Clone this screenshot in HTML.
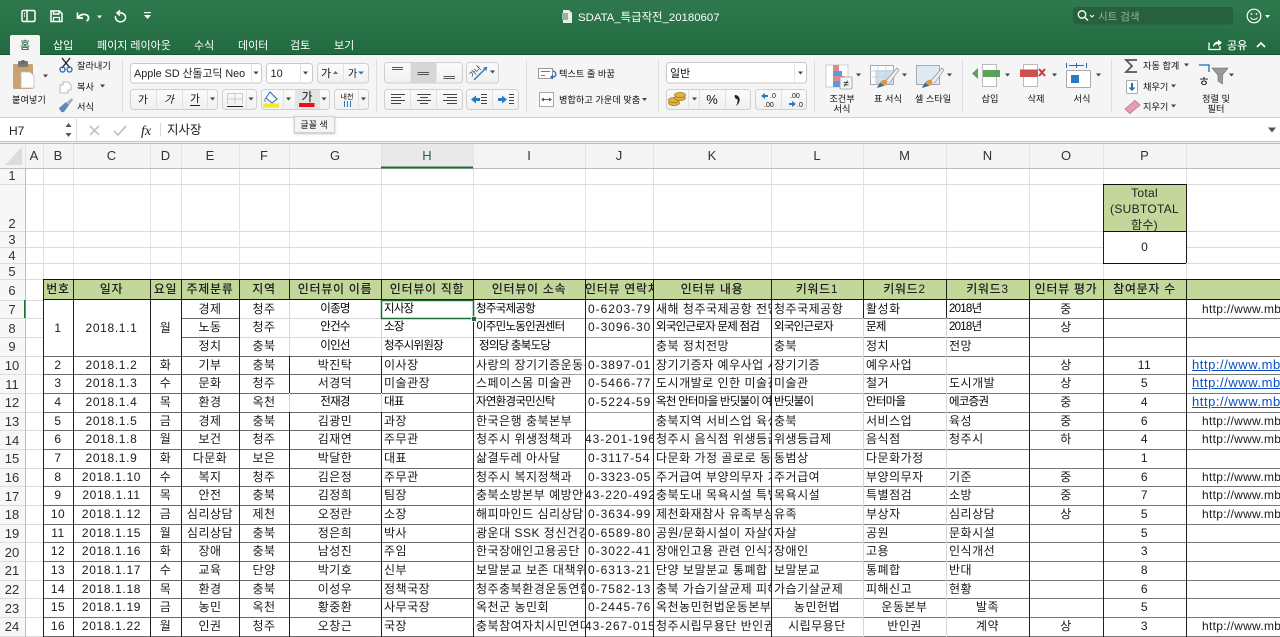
<!DOCTYPE html>
<html lang="ko"><head><meta charset="utf-8"><title>SDATA_특급작전_20180607</title>
<style>
html,body{margin:0;padding:0;background:#fff}
body{width:1280px;height:637px;overflow:hidden;position:relative;font-family:"Liberation Sans","Noto Sans CJK KR",sans-serif;color:#222;filter:blur(.3px)}
svg{position:absolute;left:0;top:0;display:block}
svg text{font-family:"Liberation Sans","Noto Sans CJK KR",sans-serif}
.w{fill:#fff;font-size:11px}
.k{fill:#111;font-size:9.200px;font-weight:400}
.m{text-anchor:middle}
.g{position:absolute;left:43px;top:279px;display:grid;grid-template-columns:30px 77px 31px 58px 50px 92px 92px 112px 68px 118px 92px 83px 83px 74px 83px 94px;grid-template-rows:20.7px repeat(18,18.67px);font-size:12px;line-height:18.67px;color:#1a1a1a}
.g>*{display:block;overflow:hidden;white-space:nowrap;font-style:normal;font-weight:400;letter-spacing:.5px;text-decoration:none}
.g b{text-align:center}
.g i{padding-left:3px}
.g .h{background:#c4d79b;text-align:center;line-height:20px;font-weight:500;color:#1d1d1d;letter-spacing:.7px}
.g .d{letter-spacing:.65px}
.g .n{letter-spacing:.95px;padding-left:3px}
.g .nn{letter-spacing:.95px;padding-left:0}
.g .t{font-size:11.5px;letter-spacing:-.75px;color:#000}
.g .u{padding-left:16px;letter-spacing:.3px}
.g a{padding-left:6px;color:#0b4fc4;text-decoration:underline;letter-spacing:.55px;font-size:13px}
.g .r{grid-row:span 3;line-height:56px}
.ch,.rh{position:absolute;font-size:13px;color:#333;text-align:center}
.ch{top:144px;height:24px;line-height:24px}
.rh{left:0;width:24px}
.tot{position:absolute;left:1103px;top:184px;width:83px;height:46px;padding-top:1px;background:#c4d79b;text-align:center;font-size:12px;line-height:16px;color:#222;letter-spacing:.3px}
.zero{position:absolute;left:1103px;top:231px;width:83px;height:32px;text-align:center;font-size:12px;line-height:32px}
</style></head><body>

<div style="position:absolute;left:0;top:144px;width:1280px;height:24px;background:#f4f4f4"></div>
<div style="position:absolute;left:0;top:168px;width:25px;height:469px;background:#f7f7f7"></div>
<div style="position:absolute;left:381px;top:144px;width:92px;height:24px;background:#e9e9e9"></div>
<div style="position:absolute;left:43px;top:279px;width:1237px;height:21px;background:#c4d79b"></div>

<div class="g">
<span class="h">번호</span><span class="h">일자</span><span class="h">요일</span><span class="h">주제분류</span><span class="h">지역</span><span class="h">인터뷰이 이름</span><span class="h">인터뷰이 직함</span><span class="h">인터뷰이 소속</span><span class="h">인터뷰 연락처</span><span class="h">인터뷰 내용</span><span class="h">키워드1</span><span class="h">키워드2</span><span class="h">키워드3</span><span class="h">인터뷰 평가</span><span class="h">참여문자 수</span><span class="h"></span>

<b class="r">1</b><b class="r d">2018.1.1</b><b class="r">월</b><b>경제</b><b>청주</b><b class="t">이종명</b><i class="t">지사장</i><i class="t">청주국제공항</i><i class="n">0-6203-79</i><i>새해 청주국제공항 전망</i><i>청주국제공항</i><i>활성화</i><i class="t">2018년</i><b>중</b><b></b><i class="u">http://www.mb</i>
<b>노동</b><b>청주</b><b class="t">안건수</b><i class="t">소장</i><i class="t">이주민노동인권센터</i><i class="n">0-3096-30</i><i class="t">외국인근로자 문제 점검</i><i class="t">외국인근로자</i><i class="t">문제</i><i class="t">2018년</i><b>상</b><b></b><i></i>
<b>정치</b><b>충북</b><b class="t">이인선</b><i class="t">청주시위원장</i><i class="t" style="padding-left:6px">정의당 충북도당</i><i></i><i>충북 정치전망</i><i>충북</i><i>정치</i><i>전망</i><b></b><b></b><i></i>

<b>2</b><b class="d">2018.1.2</b><b>화</b><b>기부</b><b>충북</b><b>박진탁</b><i>이사장</i><i>사랑의 장기기증운동본</i><i class="n">0-3897-01</i><i>장기기증자 예우사업 시</i><i>장기기증</i><i>예우사업</i><i></i><b>상</b><b>11</b><a>http://www.mbc</a>
<b>3</b><b class="d">2018.1.3</b><b>수</b><b>문화</b><b>청주</b><b>서경덕</b><i>미술관장</i><i>스페이스몸 미술관</i><i class="n">0-5466-77</i><i>도시개발로 인한 미술관</i><i>미술관</i><i>철거</i><i>도시개발</i><b>상</b><b>5</b><a>http://www.mbc</a>
<b>4</b><b class="d">2018.1.4</b><b>목</b><b>환경</b><b>옥천</b><b class="t">전재경</b><i class="t">대표</i><i class="t">자연환경국민신탁</i><i class="n">0-5224-59</i><i class="t">옥천 안터마을 반딧불이 여</i><i class="t">반딧불이</i><i class="t">안터마을</i><i class="t">에코증권</i><b>중</b><b>4</b><a>http://www.mbc</a>
<b>5</b><b class="d">2018.1.5</b><b>금</b><b>경제</b><b>충북</b><b>김광민</b><i>과장</i><i>한국은행 충북본부</i><i></i><i>충북지역 서비스업 육성</i><i>충북</i><i>서비스업</i><i>육성</i><b>중</b><b>6</b><i class="u">http://www.mb</i>
<b>6</b><b class="d">2018.1.8</b><b>월</b><b>보건</b><b>청주</b><b>김재연</b><i>주무관</i><i>청주시 위생정책과</i><i class="nn">43-201-196</i><i>청주시 음식점 위생등급</i><i>위생등급제</i><i>음식점</i><i>청주시</i><b>하</b><b>4</b><i class="u">http://www.mb</i>
<b>7</b><b class="d">2018.1.9</b><b>화</b><b>다문화</b><b>보은</b><b>박달한</b><i>대표</i><i>삶결두레 아사달</i><i class="n">0-3117-54</i><i>다문화 가정 골로로 동</i><i>동범상</i><i>다문화가정</i><i></i><b></b><b>1</b><i></i>
<b>8</b><b class="d">2018.1.10</b><b>수</b><b>복지</b><b>청주</b><b>김은정</b><i>주무관</i><i>청주시 복지정책과</i><i class="n">0-3323-05</i><i>주거급여 부양의무자 기</i><i>주거급여</i><i>부양의무자</i><i>기준</i><b>중</b><b>6</b><i class="u">http://www.mb</i>
<b>9</b><b class="d">2018.1.11</b><b>목</b><b>안전</b><b>충북</b><b>김정희</b><i>팀장</i><i>충북소방본부 예방안</i><i class="nn">43-220-492</i><i>충북도내 목욕시설 특별</i><i>목욕시설</i><i>특별점검</i><i>소방</i><b>중</b><b>7</b><i class="u">http://www.mb</i>
<b>10</b><b class="d">2018.1.12</b><b>금</b><b>심리상담</b><b>제천</b><b>오정란</b><i>소장</i><i>해피마인드 심리상담</i><i class="n">0-3634-99</i><i>제천화재참사 유족부상</i><i>유족</i><i>부상자</i><i>심리상담</i><b>상</b><b>5</b><i class="u">http://www.mb</i>
<b>11</b><b class="d">2018.1.15</b><b>월</b><b>심리상담</b><b>충북</b><b>정은희</b><i>박사</i><i>광운대 SSK 정신건강</i><i class="n">0-6589-80</i><i>공원/문화시설이 자살여</i><i>자살</i><i>공원</i><i>문화시설</i><b></b><b>5</b><i></i>
<b>12</b><b class="d">2018.1.16</b><b>화</b><b>장애</b><b>충북</b><b>남성진</b><i>주임</i><i>한국장애인고용공단</i><i class="n">0-3022-41</i><i>장애인고용 관련 인식개</i><i>장애인</i><i>고용</i><i>인식개선</i><b></b><b>3</b><i></i>
<b>13</b><b class="d">2018.1.17</b><b>수</b><b>교육</b><b>단양</b><b>박기호</b><i>신부</i><i>보말분교 보존 대책위</i><i class="n">0-6313-21</i><i>단양 보말분교 통폐합</i><i>보말분교</i><i>통폐합</i><i>반대</i><b></b><b>8</b><i></i>
<b>14</b><b class="d">2018.1.18</b><b>목</b><b>환경</b><b>충북</b><b>이성우</b><i>정책국장</i><i>청주충북환경운동연합</i><i class="n">0-7582-13</i><i>충북 가습기살균제 피해</i><i>가습기살균제</i><i>피해신고</i><i>현황</i><b></b><b>6</b><i></i>
<b>15</b><b class="d">2018.1.19</b><b>금</b><b>농민</b><b>옥천</b><b>황중환</b><i>사무국장</i><i>옥천군 농민회</i><i class="n">0-2445-76</i><i>옥천농민헌법운동본부</i><b>농민헌법</b><b>운동본부</b><b>발족</b><b></b><b>5</b><i></i>
<b>16</b><b class="d">2018.1.22</b><b>월</b><b>인권</b><b>청주</b><b>오창근</b><i>국장</i><i>충북참여자치시민연대</i><i class="nn">43-267-015</i><i>청주시립무용단 반인권</i><b>시립무용단</b><b>반인권</b><b>계약</b><b>상</b><b>3</b><i class="u">http://www.mb</i>
</div>

<div class="tot">Total<br>(SUBTOTAL<br>함수)</div>
<div class="zero">0</div>

<div class="ch" style="left:25px;width:18px">A</div><div class="ch" style="left:43px;width:30px">B</div><div class="ch" style="left:73px;width:77px">C</div><div class="ch" style="left:150px;width:31px">D</div><div class="ch" style="left:181px;width:58px">E</div><div class="ch" style="left:239px;width:50px">F</div><div class="ch" style="left:289px;width:92px">G</div><div class="ch" style="left:381px;width:92px;color:#1e6b3a">H</div><div class="ch" style="left:473px;width:112px">I</div><div class="ch" style="left:585px;width:68px">J</div><div class="ch" style="left:653px;width:118px">K</div><div class="ch" style="left:771px;width:92px">L</div><div class="ch" style="left:863px;width:83px">M</div><div class="ch" style="left:946px;width:83px">N</div><div class="ch" style="left:1029px;width:74px">O</div><div class="ch" style="left:1103px;width:83px">P</div>

<div class="rh" style="top:168px;line-height:16px">1</div>
<div class="rh" style="top:216px;line-height:16px">2</div>
<div class="rh" style="top:232px;line-height:16px">3</div>
<div class="rh" style="top:248px;line-height:16px">4</div>
<div class="rh" style="top:264px;line-height:16px">5</div>
<div class="rh" style="top:282px;line-height:18px">6</div>
<div class="rh" style="top:301px;line-height:18px">7</div>
<div class="rh" style="top:320px;line-height:18px">8</div>
<div class="rh" style="top:338px;line-height:18px">9</div>
<div class="rh" style="top:357px;line-height:18px">10</div>
<div class="rh" style="top:376px;line-height:18px">11</div>
<div class="rh" style="top:394px;line-height:18px">12</div>
<div class="rh" style="top:413px;line-height:18px">13</div>
<div class="rh" style="top:432px;line-height:18px">14</div>
<div class="rh" style="top:450px;line-height:18px">15</div>
<div class="rh" style="top:469px;line-height:18px">16</div>
<div class="rh" style="top:488px;line-height:18px">17</div>
<div class="rh" style="top:506px;line-height:18px">18</div>
<div class="rh" style="top:525px;line-height:18px">19</div>
<div class="rh" style="top:544px;line-height:18px">20</div>
<div class="rh" style="top:562px;line-height:18px">21</div>
<div class="rh" style="top:581px;line-height:18px">22</div>
<div class="rh" style="top:600px;line-height:18px">23</div>
<div class="rh" style="top:618px;line-height:18px">24</div>

<svg width="1280" height="637" viewBox="0 0 1280 637" style="pointer-events:none">
<g shape-rendering="crispEdges" fill="none">
<path stroke="#e2e2e2" d="M43.5 144V279M73.5 144V279M150.5 144V279M181.5 144V279M239.5 144V279M289.5 144V279M381.5 144V279M473.5 144V279M585.5 144V279M653.5 144V279M771.5 144V279M863.5 144V279M946.5 144V279M1029.5 144V279M1103.5 144V279M1186.5 144V279M25.5 144V637"/>
<path stroke="#dcdcdc" d="M0 184.5H1280M0 231.5H1280M0 247.5H1103M1187 247.5H1280M0 263.5H1280M0 279.5H43M0 300.5H43M0 318.5H43M0 337.5H43M0 356.5H43M0 374.5H43M0 393.5H43M0 412.5H43M0 430.5H43M0 449.5H43M0 468.5H43M0 486.5H43M0 505.5H43M0 524.5H43M0 542.5H43M0 561.5H43M0 580.5H43M0 598.5H43M0 617.5H43M0 636.5H43"/>
<path stroke="#bdbdbd" d="M0 168.5H1280M0 143.5H1280M25.5 168V637"/>
<path stroke="#6a6a6a" d="M43 356.5H473M43 374.5H473M43 393.5H473M43 412.5H473M43 430.5H473M43 449.5H473M43 468.5H473M43 486.5H473M43 505.5H473M43 524.5H473M43 542.5H473M43 561.5H473M43 580.5H473M43 598.5H473M43 617.5H473M43 636.5H473M181 318.5H239M181 337.5H239"/>
<path stroke="#d8d8d8" d="M239 318.5H473M239 337.5H473"/>
<path stroke="#a0a0a0" d="M473 318.5H863M473 337.5H863M473 356.5H863M473 374.5H863M473 393.5H863M473 412.5H863M473 430.5H863M473 449.5H863M473 468.5H863M473 486.5H863M473 505.5H863M473 524.5H863M473 542.5H863M473 561.5H863M473 580.5H863M473 598.5H863M473 617.5H863M473 636.5H863"/>
<path stroke="#777" d="M863 318.5H1280M863 337.5H1280M863 356.5H1280M863 374.5H1280M863 393.5H1280M863 412.5H1280M863 430.5H1280M863 449.5H1280M863 468.5H1280M863 486.5H1280M863 505.5H1280M863 524.5H1280M863 542.5H1280M863 561.5H1280M863 580.5H1280M863 598.5H1280M863 617.5H1280M863 636.5H1280"/>
<path stroke="#d6d6d6" d="M863.5 318V637M946.5 318V637M289.5 300V356M381.5 318V356M289.5 393V412M381.5 393V412"/>
<path stroke="#1f1f1f" d="M43.5 279V637M73.5 279V637M150.5 279V637M181.5 279V637M239.5 279V637M289.5 279V300M381.5 279V300M289.5 356V393M381.5 356V393M289.5 412V637M381.5 412V637M473.5 279V637M585.5 279V637M653.5 279V637M771.5 279V637M863.5 279V318M946.5 279V318M1029.5 279V637M1103.5 184V263M1103.5 279V637M1186.5 184V263M1186.5 279V637"/>
<path stroke="#111" d="M43 279.5H1280M43 299.5H1280M1103 184.5H1186M1103 231.5H1186M1103 263.5H1186"/>
</g>
<rect x="381" y="166.500" width="92" height="2" fill="#1e6b3a"/>
<rect x="24" y="300" width="1.500" height="18" fill="#1e6b3a"/>
<rect x="381.500" y="300.500" width="92" height="18" fill="none" stroke="#1e6b3a" stroke-width="1.500"/>
<rect x="471.500" y="316.500" width="5" height="5" fill="#1e6b3a" stroke="#fff" stroke-width=".8"/>
<polygon points="22,147 22,165 5,165" fill="#dcdcdc"/>
</svg>

<svg width="1280" height="144" viewBox="0 0 1280 144">
<defs><linearGradient id="tb" x1="0" y1="0" x2="0" y2="1"><stop offset="0" stop-color="#30794f"/><stop offset="1" stop-color="#216a40"/></linearGradient>
<linearGradient id="bt" x1="0" y1="0" x2="0" y2="1"><stop offset="0" stop-color="#fbfbfb"/><stop offset="1" stop-color="#f0f0f0"/></linearGradient></defs>
<rect width="1280" height="55" fill="url(#tb)"/>
<rect y="54" width="1280" height="1" fill="#17552f"/>
<rect y="55" width="1280" height="62" fill="#f5f5f5"/>
<rect y="117" width="1280" height="1" fill="#cfcfcf"/>
<rect y="118" width="1280" height="23" fill="#fff"/>
<rect y="141" width="1280" height="1" fill="#c4c4c4"/>
<rect y="142" width="1280" height="1" fill="#f0f0f0"/>

<g fill="none" stroke="#fff" stroke-width="1.500">
<rect x="22" y="10.500" width="13" height="11" rx="1.500"/><path d="M27 10.500V21.500M24 13.500H25M24 16H25"/>
<path d="M51 11H59.500L62 13.500V21.500H51Z"/><path d="M53.500 11V14H59V11" /><path d="M53.500 21V17.500H59.500V21" stroke-width="1.200"/>
<path d="M77.500 12.500V18H83M78 18C80 14 85 13.500 87.500 15.500 89.500 17.500 88.500 20 86.500 21" stroke-width="1.700"/>
<path d="M120 10.500L117 13 120 15.500M118 13C122 12 126 14.500 125.500 18 125 21 121.500 22.500 118.500 21.500 116 20.500 115 18 115.500 16" stroke-width="1.500"/>
</g>
<path d="M97 15.500h5l-2.500 3z" fill="#fff"/>
<rect x="144" y="12" width="7" height="1.200" fill="#fff"/><path d="M144 15h7l-3.500 4z" fill="#fff"/>

<path d="M10 55V37a2 2 0 0 1 2-2H38a2 2 0 0 1 2 2V55Z" fill="#f5f5f5"/>
<text x="25" y="49" class="m" style="font-size:11px;fill:#1e6b3a;font-weight:500">홈</text>
<text x="53" y="49" class="w">삽입</text>
<text x="97" y="49" class="w">페이지 레이아웃</text>
<text x="194" y="49" class="w">수식</text>
<text x="238" y="49" class="w">데이터</text>
<text x="290" y="49" class="w">검토</text>
<text x="334" y="49" class="w">보기</text>

<path d="M563 10h6l3 3v10h-9z" fill="#e8efe9"/><rect x="562" y="13" width="6" height="7" fill="#8fb79d"/>
<text x="578" y="21" style="font-size:11.400px;fill:#fff">SDATA_특급작전_20180607</text>

<rect x="1073" y="7" width="160" height="17.500" rx="3" fill="#26603d"/>
<circle cx="1082" cy="14.500" r="3.700" fill="none" stroke="#fff" stroke-width="1.300"/><path d="M1085 17.500L1088 20.500" stroke="#fff" stroke-width="1.500"/>
<path d="M1090 15l2 2 2-2" fill="none" stroke="#fff" stroke-width="1"/>
<text x="1098" y="20" style="font-size:10.500px;fill:#93b3a0">시트 검색</text>
<circle cx="1254" cy="16" r="6.800" fill="none" stroke="#fff" stroke-width="1.200"/>
<circle cx="1251.500" cy="14" r=".9" fill="#fff"/><circle cx="1256.500" cy="14" r=".9" fill="#fff"/>
<path d="M1250.500 17.500C1252 20 1256 20 1257.500 17.500" fill="none" stroke="#fff" stroke-width="1"/>
<path d="M1265 15h5l-2.500 3z" fill="#fff"/>

<path d="M1209 42.500V49.500H1220V46" fill="none" stroke="#fff" stroke-width="1.300"/>
<path d="M1213 47C1213 43 1216 41.500 1218 41.500V39.500L1222 42.800 1218 46V44C1216 44 1214.500 45 1213 47Z" fill="#fff"/>
<text x="1227" y="49" class="w" style="font-weight:500">공유</text>
<path d="M1257 47L1261 43 1265 47" fill="none" stroke="#fff" stroke-width="1.800"/>

<rect x="13" y="64" width="20" height="25" rx="1.500" fill="#c9a173"/>
<rect x="18" y="61" width="10" height="6" rx="1" fill="#777"/><circle cx="23" cy="62" r="2" fill="#666"/>
<path d="M21 72H30L34 76V88H21Z" fill="#fdfdfd" stroke="#bbb" stroke-width=".7"/>
<path d="M43 74.500h5l-2.500 3z" fill="#444"/>
<text x="12" y="103" class="k">붙여넣기</text>
<g fill="none" stroke="#222" stroke-width="1.400"><path d="M62 58L70 68M70 58L62 68"/></g>
<circle cx="62.500" cy="69.500" r="2.500" fill="none" stroke="#2469b3" stroke-width="1.300"/><circle cx="69.500" cy="69.500" r="2.500" fill="none" stroke="#2469b3" stroke-width="1.300"/>
<text x="77" y="69" class="k">잘라내기</text>
<path d="M63 82H68L71 85V90H68V93H60V85H63Z" fill="#fff" stroke="#aaa" stroke-width=".8"/>
<text x="77" y="90" class="k">복사</text><path d="M100 84.500h5l-2.500 3z" fill="#444"/>
<path d="M59 108L66 102 69 105 64 112C62 113 60 111 59 108Z" fill="#5d8ac0"/><path d="M67 102L72 98 73 100 69 105Z" fill="#aaa"/>
<text x="77" y="110" class="k">서식</text>
<rect x="122" y="60" width="1" height="53" fill="#ddd"/>

<g fill="#fff" stroke="#c9c9c9"><rect x="130.500" y="63.500" width="131" height="19.500" rx="3"/><rect x="266.500" y="63.500" width="46" height="19.500" rx="3"/></g>
<text x="134" y="77" style="font-size:10.800px;fill:#222">Apple SD 산돌고딕 Neo</text>
<text x="270.500" y="77" style="font-size:11px;fill:#222">10</text>
<path d="M253.500 71.500h5l-2.500 3zM303 71.500h5l-2.500 3z" fill="#444"/>
<path d="M251.500 64V83M300.500 64V83" stroke="#e5e5e5"/>
<g fill="url(#bt)" stroke="#d0d0d0">
<rect x="317.500" y="63.500" width="51" height="19.500" rx="3"/>
<rect x="130.500" y="89.500" width="87" height="20" rx="3"/>
<rect x="222.500" y="89.500" width="34" height="20" rx="3"/>
<rect x="261.500" y="89.500" width="68" height="20" rx="3"/>
<rect x="334.500" y="89.500" width="34" height="20" rx="3"/>
</g>
<path d="M343.500 64V83M156.500 90V109M182.500 90V109M207.500 90V109M246.500 90V109M283.500 90V109M319.500 90V109M358.500 90V109" stroke="#e2e2e2"/>
<rect x="295" y="90" width="24" height="19" fill="#e4e4e4"/>
<text x="321" y="77" class="k" style="font-size:11px">가</text><path d="M333 74l2.500-3 2.500 3z" fill="#2b79c2"/>
<text x="348" y="77" class="k" style="font-size:10px">가</text><path d="M358 71.500h6l-3 3z" fill="#2b79c2"/>
<text x="143" y="103" class="k m" style="font-size:10.500px">가</text>
<text x="169" y="103" class="k m" style="font-size:10.500px;font-style:italic">가</text>
<text x="195" y="102" class="k m" style="font-size:10.500px">가</text><rect x="190" y="105" width="10" height="1" fill="#222"/>
<path d="M210 97.500h5l-2.500 3zM248.500 97.500h5l-2.500 3zM286 97.500h5l-2.500 3zM321.500 97.500h5l-2.500 3zM361 97.500h5l-2.500 3z" fill="#444"/>
<path d="M227.500 93.500H242.500V104M227.500 93.500V104M235 93.500V104M227.500 99H242.500" fill="none" stroke="#ccc"/><rect x="227" y="106" width="16" height="1" fill="#222"/>
<path d="M270 92L277 99 272 103 266 98Z" fill="#fff" stroke="#2469b3" stroke-width="1"/><path d="M266 98C264 99 265 101 265 102" fill="none" stroke="#888"/>
<rect x="263" y="103.500" width="16" height="4" fill="#f3e92b"/>
<text x="307" y="101" class="k m" style="font-size:12px">가</text>
<rect x="299" y="103" width="15.500" height="4" fill="#e8101a"/>
<text x="347" y="99" class="k m" style="font-size:7px">내천</text>
<path d="M344.500 101V107M347.500 101V107M350.500 101V107" stroke="#2b79c2"/>

<rect x="376" y="60" width="1" height="53" fill="#ddd"/>

<g fill="url(#bt)" stroke="#d0d0d0">
<rect x="384.500" y="62.500" width="78" height="20.500" rx="3"/>
<rect x="466.500" y="62.500" width="32" height="20.500" rx="3"/>
<rect x="384.500" y="89.500" width="78" height="20" rx="3"/>
<rect x="466.500" y="89.500" width="52" height="20" rx="3"/>
</g>
<rect x="410.500" y="62.500" width="26" height="20.500" fill="#d6d6d6"/>
<path d="M436.500 63V83M410.500 90V109M436.500 90V109M492.500 90V109" stroke="#e2e2e2"/>
<path d="M392 67.500H403M392 69.500H403M417.500 72.500H429M417.500 74.500H429M443.500 76.500H455M443.500 78.500H455" stroke="#555" stroke-width="1" shape-rendering="crispEdges"/>
<path d="M391 94.500H405M391 97.500H401M391 100.500H405M391 103.500H401M417 94.500H431M420 97.500H428M417 100.500H431M420 103.500H428M443 94.500H457M447 97.500H457M443 100.500H457M447 103.500H457" stroke="#444" stroke-width="1"/>
<text x="477" y="73" class="k m" transform="rotate(-45 477 73)" style="font-size:7px">가나</text>
<path d="M474 80L487 67" stroke="#2b79c2" stroke-width="1.300"/><path d="M487 67l-4 .5 3.500 3.500z" fill="#2b79c2"/>
<path d="M490 70.500h5l-2.500 3z" fill="#444"/>
<path d="M471 99.500l5-4v2.500h4v3h-4v2.500z" fill="#2b79c2"/><path d="M481 94.500H487M481 97.500H487M481 100.500H487M481 103.500H487" stroke="#444"/>
<path d="M507 99.500l-5-4v2.500h-4v3h4v2.500z" fill="#2b79c2"/><path d="M509 94.500H514M509 97.500H514M509 100.500H514M509 103.500H514" stroke="#444"/>

<rect x="526" y="60" width="1" height="53" fill="#ddd"/>
<rect x="538.500" y="68.500" width="14" height="10" fill="#fff" stroke="#999"/><path d="M541 71.500H550M541 75.500H545" stroke="#777"/><path d="M553 71C557 72 557 77 552 77" fill="none" stroke="#2469b3" stroke-width="1.300"/><path d="M553 74.500v5l-3-2.500z" fill="#2469b3"/>
<text x="559" y="77" class="k">텍스트 줄 바꿈</text>
<rect x="539.500" y="92.500" width="14" height="14" fill="#fff" stroke="#aaa"/><path d="M542 99.500H551" stroke="#2469b3"/><path d="M544 97.500l-3 2 3 2zM549 97.500l3 2-3 2z" fill="#2469b3"/>
<text x="559" y="103" class="k">병합하고 가운데 맞춤</text><path d="M642 98h5l-2.500 3z" fill="#444"/>
<rect x="658" y="60" width="1" height="53" fill="#ddd"/>

<rect x="666.500" y="62.500" width="140" height="20.500" rx="3" fill="#fff" stroke="#c9c9c9"/>
<text x="670" y="77" class="k" style="font-size:11px">일반</text>
<path d="M798 71.500h5l-2.500 3z" fill="#444"/><path d="M794.500 63V83" stroke="#e5e5e5"/>
<g fill="url(#bt)" stroke="#d0d0d0">
<rect x="666.500" y="89.500" width="84" height="20" rx="3"/>
<rect x="755.500" y="89.500" width="51" height="20" rx="3"/>
</g>
<path d="M688.500 90V109M699.500 90V109M725.500 90V109M781.500 90V109" stroke="#e2e2e2"/>
<g fill="#e0b23c" stroke="#9a7420" stroke-width=".7"><ellipse cx="674" cy="103" rx="5.500" ry="2.500"/><ellipse cx="674" cy="100" rx="5.500" ry="2.500"/><ellipse cx="680" cy="98" rx="5.500" ry="2.500"/><ellipse cx="680" cy="95" rx="5.500" ry="2.500"/></g>
<path d="M692 97.500h5l-2.500 3z" fill="#444"/>
<text x="712" y="104" class="k m" style="font-size:13px">%</text>
<path d="M735 95C740 95 742 102 736 106 738 102 738 100 737 99 735 99 734 96 735 95Z" fill="#222"/>
<path d="M761 96l4-3v2h3v2h-3v2z" fill="#2b79c2"/><text x="770" y="98" class="k" style="font-size:7px">.0</text><text x="764" y="107" class="k" style="font-size:7px">.00</text>
<text x="790" y="98" class="k" style="font-size:7px">.00</text><path d="M796 104l-4-3v2h-3v2h3v2z" fill="#2b79c2"/><text x="797" y="107" class="k" style="font-size:7px">.0</text>
<rect x="814" y="60" width="1" height="53" fill="#ddd"/>

<g fill="#fff" stroke="#c4c4c4" stroke-width=".8"><rect x="826" y="65" width="22" height="22"/></g>
<rect x="833" y="65" width="6" height="7" fill="#df8a8a"/><rect x="833" y="71" width="9" height="6" fill="#5c9ae0"/><rect x="833" y="76" width="12" height="5" fill="#df8a8a"/><rect x="833" y="81" width="7" height="6" fill="#5c9ae0"/>
<rect x="840" y="77" width="12" height="12" rx="1" fill="#f4f4f4" stroke="#999" stroke-width=".8"/><text x="846" y="87" class="k m" style="font-size:10px">≠</text>
<path d="M856 73.500h5l-2.500 3z" fill="#444"/>
<text x="842" y="102" class="k m">조건부</text><text x="842" y="112" class="k m">서식</text>

<rect x="870.500" y="65.500" width="23" height="19" fill="#fff" stroke="#aaa"/><rect x="875" y="70" width="18" height="14" fill="#cfe0f3"/><path d="M870 71H894M870 77H894M878 66V85M886 66V85" stroke="#c9c9c9" stroke-width=".7"/>
<path d="M884 83L897 68 899 70 888 85Z" fill="#eee" stroke="#888" stroke-width=".6"/><path d="M877 88C879 82 883 79 886 80 889 82 887 85 884 86Z" fill="#d79b4e"/><path d="M877 88L884 85.500 880 83Z" fill="#2469b3"/>
<path d="M902 73.500h5l-2.500 3z" fill="#444"/>
<text x="888" y="102" class="k m">표 서식</text>

<rect x="916.500" y="65.500" width="23" height="19" fill="#dfe9f6" stroke="#aaa"/>
<path d="M929 83L942 68 944 70 933 85Z" fill="#eee" stroke="#888" stroke-width=".6"/><path d="M922 88C924 82 928 79 931 80 934 82 932 85 929 86Z" fill="#d79b4e"/><path d="M922 88L929 85.500 925 83Z" fill="#2469b3"/>
<path d="M947 73.500h5l-2.500 3z" fill="#444"/>
<text x="933" y="102" class="k m">셀 스타일</text>

<rect x="962" y="60" width="1" height="53" fill="#ddd"/>

<rect x="982.500" y="64.500" width="14" height="22" fill="#fff" stroke="#bbb"/>
<rect x="983" y="70" width="17" height="7" fill="#5ba05b"/><path d="M978 68v11l-6-5.500z" fill="#5ba05b"/>
<path d="M1005 73.500h5l-2.500 3z" fill="#444"/>
<text x="990" y="102" class="k m">삽입</text>
<rect x="1023.500" y="64.500" width="14" height="22" fill="#fff" stroke="#bbb"/>
<rect x="1020" y="69.500" width="18" height="7.500" fill="#cf4e50"/>
<path d="M1039 69L1045 76M1045 69L1039 76" stroke="#c53a3d" stroke-width="2"/>
<path d="M1052 73.500h5l-2.500 3z" fill="#444"/>
<text x="1036" y="102" class="k m">삭제</text>
<rect x="1066.500" y="70.500" width="24" height="17" rx="1" fill="#fff" stroke="#aaa"/>
<rect x="1071" y="75" width="8" height="8" fill="#2b79c2"/>
<path d="M1066.500 63V68M1076.500 63V68M1086.500 63V68" stroke="#2469b3"/><path d="M1069 65.500H1084" stroke="#2469b3"/>
<path d="M1096 73.500h5l-2.500 3z" fill="#444"/>
<text x="1082" y="102" class="k m">서식</text>

<rect x="1111" y="60" width="1" height="53" fill="#ddd"/>

<path d="M1137 60H1126L1132 66 1126 72H1137" fill="none" stroke="#555" stroke-width="1.700"/>
<text x="1143" y="69" class="k">자동 합계</text><path d="M1184 63.500h5l-2.500 3z" fill="#444"/>
<rect x="1126.500" y="80.500" width="11" height="13" rx="1" fill="#fff" stroke="#aaa"/><path d="M1132 83V89" stroke="#2469b3" stroke-width="2"/><path d="M1128.500 87.500h7l-3.500 3.500z" fill="#2469b3"/>
<text x="1143" y="90" class="k">채우기</text><path d="M1171 84.500h5l-2.500 3z" fill="#444"/>
<path d="M1125 109L1135 100.500 1140 105 1130 113.500Z" fill="#e79db0" stroke="#b5707f" stroke-width=".7"/>
<text x="1143" y="110" class="k">지우기</text><path d="M1171 104.500h5l-2.500 3z" fill="#444"/>
<path d="M1199 65H1209V72" fill="none" stroke="#2469b3" stroke-width="1.300"/>
<text x="1204" y="86" class="k m" style="font-size:13px">ㅎ</text>
<path d="M1212 68H1228L1222.500 75V84L1218 81V75Z" fill="#9a9a9a" stroke="#666" stroke-width=".6"/>
<path d="M1229 73.500h5l-2.500 3z" fill="#444"/>
<text x="1216" y="102" class="k m">정렬 및</text><text x="1216" y="112" class="k m">필터</text>

<text x="9" y="135" style="font-size:12px;fill:#222">H7</text>
<path d="M65.500 127l3-4 3 4zM65.500 133l3 4 3-4z" fill="#555"/>
<rect x="76" y="118" width="1" height="23" fill="#ddd"/>
<path d="M90 126L99 135M99 126L90 135" stroke="#bcbcbc" stroke-width="1.500"/>
<path d="M114 131L118 135 126 126" fill="none" stroke="#bcbcbc" stroke-width="1.500"/>
<text x="141" y="135" style="font-family:'Liberation Serif',serif;font-style:italic;font-size:14px;fill:#222">fx</text>
<rect x="160" y="123" width="1" height="13" fill="#d8d8d8"/>
<text x="167" y="134" style="font-size:12.500px;fill:#222">지사장</text>
<path d="M1268 127.500h8l-4 5z" fill="#555"/>

<rect x="294.500" y="116.500" width="40" height="16" fill="#f4f4f4" stroke="#d2d2d2" style="filter:drop-shadow(0 1px 1px rgba(0,0,0,.25))"/>
<text x="314" y="128" class="k m" style="font-size:9px">글꼴 색</text>
</svg>
</body></html>
